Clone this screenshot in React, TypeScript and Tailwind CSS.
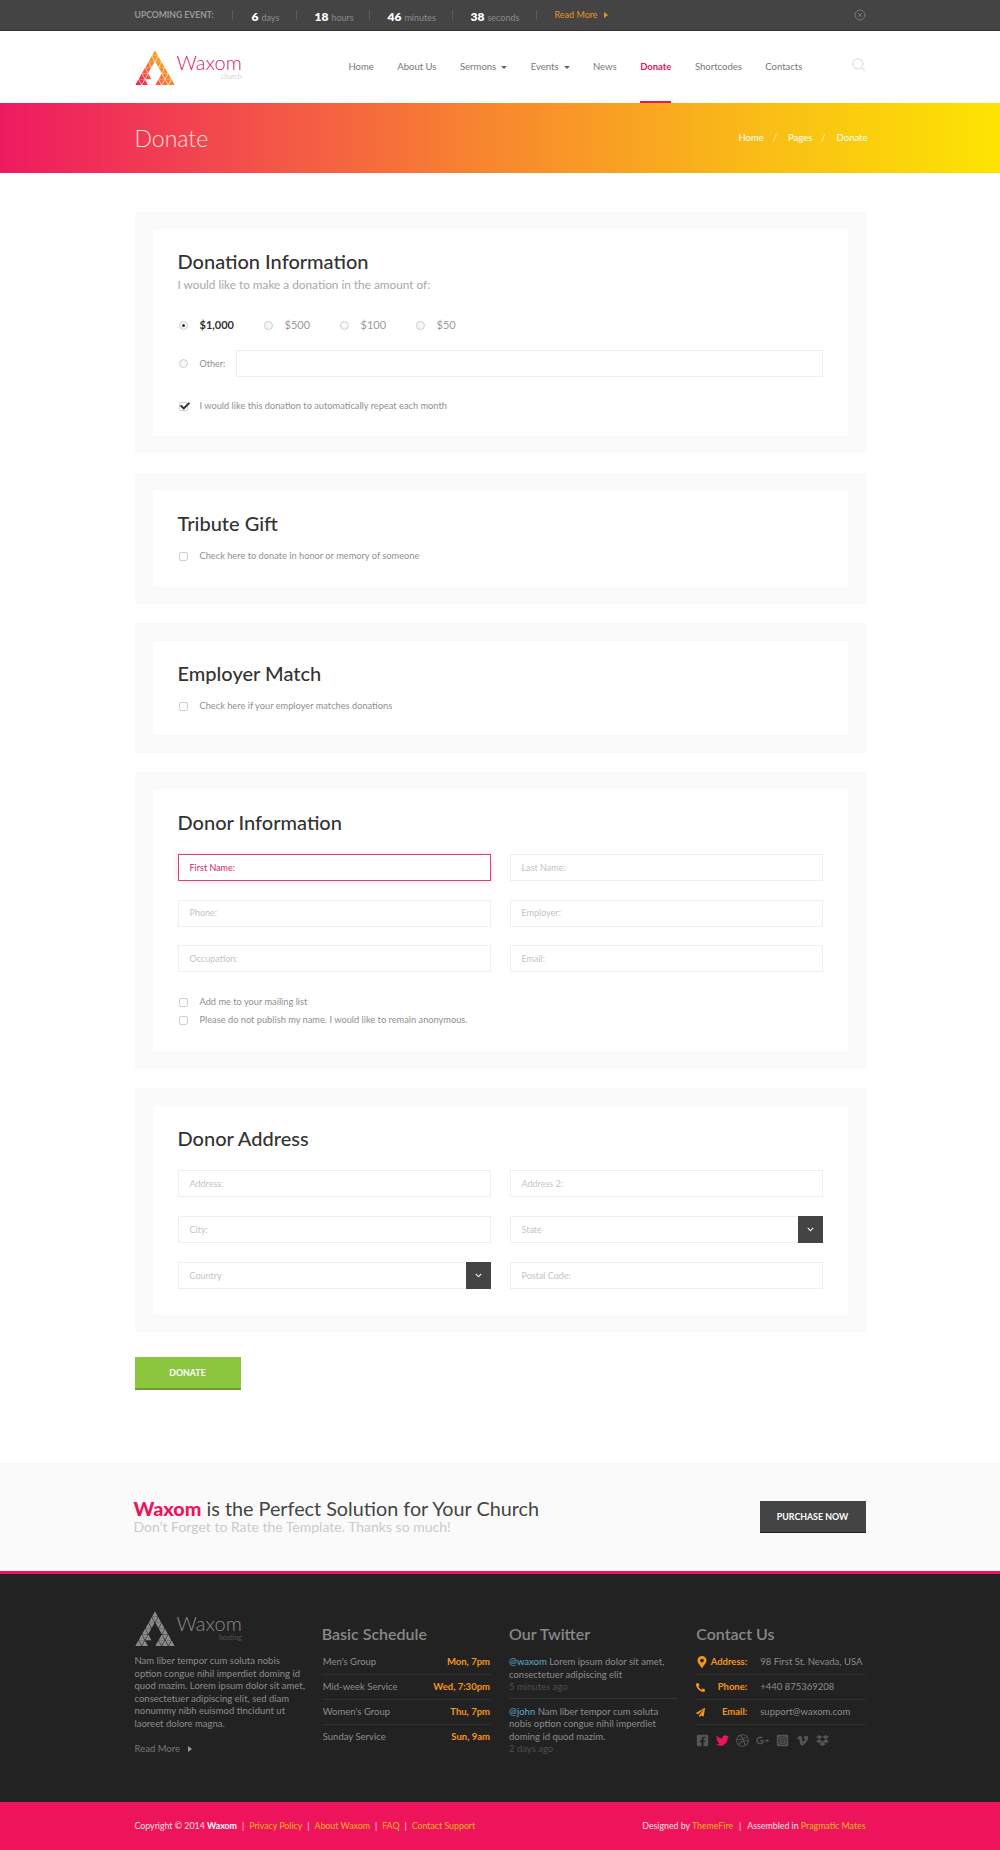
import React from "react";
import {
  FaCheck,
  FaChevronDown,
  FaDribbble,
  FaDropbox,
  FaFacebookSquare,
  FaGooglePlusG,
  FaInstagramSquare,
  FaMapMarkerAlt,
  FaPaperPlane,
  FaPhoneAlt,
  FaTwitter,
  FaVimeoV,
} from "react-icons/fa";
import { FiSearch, FiXCircle } from "react-icons/fi";

// small triangles of the logo, [row, col, up?]
const logoCells: [number, number, boolean][] = [
  [0, 0, true],
  [1, 0, true], [1, 0, false], [1, 1, true],
  [2, 0, true], [2, 0, false], [2, 2, true], [2, 1, false],
  [3, 0, true], [3, 0, false], [3, 3, true], [3, 2, false],
  [4, 0, true], [4, 0, false], [4, 1, true], [4, 3, true], [4, 3, false], [4, 4, true],
  [5, 0, true], [5, 0, false], [5, 1, true], [5, 3, true], [5, 3, false], [5, 4, true], [5, 4, false], [5, 5, true],
];

function Triangles({ fill }: { fill: string }) {
  const side = 6.67;
  const h = 5.83;
  return (
    <>
      {logoCells.map(([r, c, up], i) => {
        const left = 20 - ((r + 1) * side) / 2 + c * side;
        const top = r * h;
        const pts = up
          ? `${left + side / 2},${top + 0.3} ${left + side - 0.4},${top + h} ${left + 0.4},${top + h}`
          : `${left + side / 2 + 0.4},${top + 0.1} ${left + side * 1.5 - 0.4},${top + 0.1} ${left + side},${top + h - 0.4}`;
        return <polygon key={i} points={pts} fill={fill} />;
      })}
    </>
  );
}

function LogoMark({ mono }: { mono?: boolean }) {
  return (
    <svg width="40" height="35" viewBox="0 0 40 35" className="shrink-0">
      <defs>
        <linearGradient id="logoGrad" gradientUnits="userSpaceOnUse" x1="0" y1="35" x2="30" y2="5">
          <stop offset="0" stopColor="#ed1558" />
          <stop offset="0.55" stopColor="#f6783a" />
          <stop offset="1" stopColor="#fcb614" />
        </linearGradient>
      </defs>
      <Triangles fill={mono ? "#8a8a8a" : "url(#logoGrad)"} />
    </svg>
  );
}

function Radio({ checked }: { checked?: boolean }) {
  return (
    <span className="ml-[1px] flex h-[9px] w-[9px] shrink-0 items-center justify-center rounded-full border border-[#cfcfcf] bg-[#f6f6f6]">
      {checked && <span className="h-[3px] w-[3px] rounded-full bg-[#333]" />}
    </span>
  );
}

function CheckRow({ label, checked }: { label: string; checked?: boolean }) {
  return (
    <div className="flex h-[18px] items-center whitespace-nowrap text-[9.25px] text-[#8f8f8f]">
      <span className="relative ml-[1px] mr-[12px] block h-[9px] w-[9px] shrink-0 rounded-[2px] border border-[#cfcfcf] bg-white">
        {checked && <FaCheck className="absolute -top-[2px] left-0 text-[10px] text-[#333]" />}
      </span>
      {label}
    </div>
  );
}

function Field({ label, focus, select }: { label: string; focus?: boolean; select?: boolean }) {
  return (
    <div
      className={`relative flex h-[27px] items-center px-[11px] text-[9px] ${
        focus
          ? "border border-[#d9447f] text-[#e0185f] shadow-[0_0_6px_rgba(237,20,91,0.18)]"
          : "border border-[#efefef] text-[#c4c4c4]"
      }`}
    >
      {label}
      {select && (
        <span className="absolute -right-px -top-px flex h-[27px] w-[25px] items-center justify-center bg-[#444] text-[7px] text-white">
          <FaChevronDown />
        </span>
      )}
    </div>
  );
}

function Card({ children, pb }: { children: React.ReactNode; pb: string }) {
  return (
    <section className="mb-[19px] bg-[#fafafa] p-[18px]">
      <div className={`bg-white px-[25px] ${pb}`}>{children}</div>
    </section>
  );
}

function CardTitle({ children }: { children: React.ReactNode }) {
  return <h2 className="text-[20px] font-medium leading-[24px] text-[#333]">{children}</h2>;
}

const schedule = [
  ["Men's Group", "Mon, 7pm"],
  ["Mid-week Service", "Wed, 7:30pm"],
  ["Women's Group", "Thu, 7pm"],
  ["Sunday Service", "Sun, 9am"],
];

const contacts = [
  { icon: <FaMapMarkerAlt className="text-[12px]" />, label: "Address:", value: "98 First St. Nevada, USA" },
  { icon: <FaPhoneAlt className="text-[9px]" />, label: "Phone:", value: "+440 875369208" },
  { icon: <FaPaperPlane className="text-[9px]" />, label: "Email:", value: "support@waxom.com" },
];

const Sep = () => <span className="h-[10px] w-px bg-[#5c5c5c]" />;

function Count({ n, unit }: { n: string; unit: string }) {
  return (
    <span className="whitespace-nowrap text-[9px] text-[#8c8c8c]">
      <b className="mr-[3px] text-[12px] font-extrabold text-white">{n}</b>
      {unit}
    </span>
  );
}

export default function App() {
  const nav = ["Home", "About Us", "Sermons", "Events", "News", "Donate", "Shortcodes", "Contacts"];
  return (
    <div className="w-[1000px] bg-white font-[Lato,sans-serif]">
      {/* event bar */}
      <div className="h-[31px] border-b border-[#333] bg-[#444]">
        <div className="mx-auto flex h-full w-[731px] items-center">
          <span className="w-[97px] whitespace-nowrap text-[8.6px] font-bold text-[#9a9a9a]">UPCOMING EVENT:</span>
          <Sep />
          <span className="w-[63px] pl-[19px]"><Count n="6" unit="days" /></span>
          <Sep />
          <span className="w-[72px] pl-[18px]"><Count n="18" unit="hours" /></span>
          <Sep />
          <span className="w-[82px] pl-[18px]"><Count n="46" unit="minutes" /></span>
          <Sep />
          <span className="w-[83px] pl-[18px]"><Count n="38" unit="seconds" /></span>
          <Sep />
          <span className="ml-[18px] text-[9px] text-[#e8941e]">Read More</span>
          <span className="ml-[6px] h-0 w-0 border-y-[3px] border-l-[4px] border-y-transparent border-l-[#e8941e]" />
          <FiXCircle className="ml-auto text-[12px] text-[#777]" />
        </div>
      </div>

      {/* main nav */}
      <header className="h-[72px]">
        <div className="mx-auto flex h-full w-[731px]">
          <div className="flex w-[214px] items-start pt-[19px]">
            <LogoMark />
            <div className="ml-[2px] mt-[2px]">
              <div className="text-[20px] font-light leading-[20px] text-[#e0185f]">Waxom</div>
              <div className="text-right text-[7px] leading-[8px] text-[#d5d5d5]">church</div>
            </div>
          </div>
          <nav className="flex whitespace-nowrap text-[9.5px] text-[#777]">
            {nav.map((item) => (
              <a
                key={item}
                className={`mr-[23.5px] flex h-[72px] items-center border-b-2 pt-[2px] ${
                  item === "Donate" ? "border-[#ed145b] font-bold text-[#e0185f]" : "border-transparent"
                }`}
              >
                {item}
                {(item === "Sermons" || item === "Events") && (
                  <span className="ml-[5px] h-0 w-0 border-x-[3px] border-t-[3px] border-x-transparent border-t-[#666]" />
                )}
              </a>
            ))}
          </nav>
          <FiSearch strokeWidth={3} className="ml-auto mt-[26px] text-[15px] text-[#e8e8e8]" />
        </div>
      </header>

      {/* page title */}
      <div className="h-[70px] bg-[linear-gradient(90deg,#ee1a61_0%,#f3504a_25%,#f8892d_50%,#f9bb17_75%,#fde402_100%)]">
        <div className="mx-auto flex h-full w-[731px] items-center justify-between">
          <h1 className="text-[23px] font-light text-[#fbe3df]">Donate</h1>
          <div className="-mr-[2px] flex gap-[9px] text-[9.5px] text-white">
            <span>Home</span>
            <span className="opacity-70">/</span>
            <span className="ml-[2px]">Pages</span>
            <span className="opacity-70">/</span>
            <span className="ml-[2px]">Donate</span>
          </div>
        </div>
      </div>

      <main className="mx-auto w-[731px] pt-[39px]">
        <Card pb="pb-[21px]">
          <div className="pt-[19px]">
            <CardTitle>Donation Information</CardTitle>
            <p className="mt-[3px] text-[11.8px] leading-[18px] text-[#a8a8a8]">I would like to make a donation in the amount of:</p>
            <div className="mt-[22px] flex h-[18px] items-center text-[11px] text-[#9a9a9a]">
              <Radio checked />
              <b className="ml-[12px] w-[63px] font-bold text-[#333]">$1,000</b>
              <Radio />
              <span className="ml-[12px] w-[54px]">$500</span>
              <Radio />
              <span className="ml-[12px] w-[54px]">$100</span>
              <Radio />
              <span className="ml-[12px]">$50</span>
            </div>
            <div className="mt-[16px] flex items-center text-[9px] text-[#8f8f8f]">
              <Radio />
              <span className="ml-[12px] w-[36px]">Other:</span>
              <div className="h-[27px] flex-1 border border-[#efefef]" />
            </div>
            <div className="mt-[20px]">
              <CheckRow checked label="I would like this donation to automatically repeat each month" />
            </div>
          </div>
        </Card>

        <Card pb="pb-[21px]">
          <div className="pt-[20px]">
            <CardTitle>Tribute Gift</CardTitle>
            <div className="mt-[12px]">
              <CheckRow label="Check here to donate in honor or memory of someone" />
            </div>
          </div>
        </Card>

        <Card pb="pb-[20px]">
          <div className="pt-[20px]">
            <CardTitle>Employer Match</CardTitle>
            <div className="mt-[12px]">
              <CheckRow label="Check here if your employer matches donations" />
            </div>
          </div>
        </Card>

        <Card pb="pb-[22px]">
          <div className="pt-[20px]">
            <CardTitle>Donor Information</CardTitle>
            <div className="mt-[20px] grid grid-cols-2 gap-x-[19px] gap-y-[18.5px]">
              <Field focus label="First Name:" />
              <Field label="Last Name:" />
              <Field label="Phone:" />
              <Field label="Employer:" />
              <Field label="Occupation:" />
              <Field label="Email:" />
            </div>
            <div className="mt-[21px]">
              <CheckRow label="Add me to your mailing list" />
              <CheckRow label="Please do not publish my name. I would like to remain anonymous." />
            </div>
          </div>
        </Card>

        <Card pb="pb-[25px]">
          <div className="pt-[20px]">
            <CardTitle>Donor Address</CardTitle>
            <div className="mt-[20px] grid grid-cols-2 gap-x-[19px] gap-y-[19px]">
              <Field label="Address:" />
              <Field label="Address 2:" />
              <Field label="City:" />
              <Field select label="State" />
              <Field select label="Country" />
              <Field label="Postal Code:" />
            </div>
          </div>
        </Card>

        <button className="mb-[73px] mt-[25px] block h-[33px] w-[106px] border-b-2 border-[#6f9e2f] bg-[#8cc63f] text-[8.8px] font-bold text-white">
          DONATE
        </button>
      </main>

      {/* call to action */}
      <div className="h-[111px] border-b-[3px] border-[#ed145b] bg-[#fafafa]">
        <div className="mx-auto flex h-full w-[731px] items-center justify-between">
          <div className="-ml-[1px] -mt-[2px]">
            <div className="text-[19.8px] leading-[22px] text-[#444]">
              <b className="font-black text-[#ed145b]">Waxom</b> is the Perfect Solution for Your Church
            </div>
            <div className="text-[14px] leading-[16px] text-[#cacaca]">Don't Forget to Rate the Template. Thanks so much!</div>
          </div>
          <button className="h-[32px] w-[106px] border-b border-[#222] bg-[#444] text-[8.8px] font-bold text-white">
            PURCHASE NOW
          </button>
        </div>
      </div>

      {/* footer */}
      <footer className="h-[228px] bg-[#222]">
        <div className="mx-auto grid w-[731px] grid-cols-4 gap-x-[18px] pt-[37px] text-[9.5px] leading-[12.5px] text-[#8c8c8c]">
          <div>
            <div className="flex">
              <LogoMark mono />
              <div className="ml-[2px] mt-[2px]">
                <div className="text-[20px] font-light leading-[20px] text-[#8a8a8a]">Waxom</div>
                <div className="text-right text-[7px] leading-[8px] text-[#555]">hosting</div>
              </div>
            </div>
            <p className="mt-[9px] whitespace-nowrap">
              Nam liber tempor cum soluta nobis<br />
              option congue nihil imperdiet doming id<br />
              quod mazim. Lorem ipsum dolor sit amet,<br />
              consectetuer adipiscing elit, sed diam<br />
              nonummy nibh euismod tincidunt ut<br />
              laoreet dolore magna.
            </p>
            <div className="mt-[13px] flex items-center text-[#777]">
              Read More
              <span className="ml-[8px] h-0 w-0 border-y-[3px] border-l-[4px] border-y-transparent border-l-[#999]" />
            </div>
          </div>

          <div>
            <h3 className="mt-[14px] text-[16px] font-semibold leading-[18px] text-[#888]">Basic Schedule</h3>
            <ul className="mt-[7px]">
              {schedule.map(([name, time]) => (
                <li key={name} className="flex h-[25px] items-center justify-between border-b border-[#2f2f2f] px-[1px] last:border-b-0">
                  <span>{name}</span>
                  <b className="font-bold text-[#f7941e]">{time}</b>
                </li>
              ))}
            </ul>
          </div>

          <div>
            <h3 className="mt-[14px] text-[16px] font-semibold leading-[18px] text-[#888]">Our Twitter</h3>
            <div className="mt-[13px] border-b border-[#333] pb-[4px]">
              <p><span className="text-[#5fa8c8]">@waxom</span> Lorem ipsum dolor sit amet,<br />consectetuer adipiscing elit</p>
              <p className="text-[#4d4d4d]">5 minutes ago</p>
            </div>
            <div className="mt-[7px]">
              <p><span className="text-[#5fa8c8]">@john</span> Nam liber tempor cum soluta<br />nobis option congue nihil imperdiet<br />doming id quod mazim.</p>
              <p className="text-[#4d4d4d]">2 days ago</p>
            </div>
          </div>

          <div>
            <h3 className="mt-[14px] text-[16px] font-semibold leading-[18px] text-[#888]">Contact Us</h3>
            <ul className="mt-[7px]">
              {contacts.map((c) => (
                <li key={c.label} className="flex h-[25px] items-center whitespace-nowrap border-b border-[#2f2f2f]">
                  <span className="w-[12px] text-[#f7941e]">{c.icon}</span>
                  <b className="w-[39px] text-right font-bold text-[#f7941e]">{c.label}</b>
                  <span className="ml-[13px]">{c.value}</span>
                </li>
              ))}
            </ul>
            <div className="mt-[9px] flex items-center gap-[7px] text-[13px] text-[#555]">
              <FaFacebookSquare />
              <FaTwitter className="text-[#ed145b]" />
              <FaDribbble />
              <FaGooglePlusG />
              <FaInstagramSquare />
              <FaVimeoV />
              <FaDropbox />
            </div>
          </div>
        </div>
      </footer>

      {/* copyright */}
      <div className="h-[48px] bg-[#ed145b]">
        <div className="mx-auto flex h-full w-[731px] items-center justify-between text-[8.8px] text-[#fbe3df]">
          <div className="flex gap-[5px]">
            <span>Copyright © 2014 <b className="text-white">Waxom</b></span>
            <span>|</span>
            <span className="text-[#fdb813]">Privacy Policy</span>
            <span>|</span>
            <span className="text-[#fdb813]">About Waxom</span>
            <span>|</span>
            <span className="text-[#fdb813]">FAQ</span>
            <span>|</span>
            <span className="text-[#fdb813]">Contact Support</span>
          </div>
          <div className="flex gap-[6px]">
            <span>Designed by <span className="text-[#fdb813]">ThemeFire</span></span>
            <span>|</span>
            <span>Assembled in <span className="text-[#fdb813]">Pragmatic Mates</span></span>
          </div>
        </div>
      </div>
    </div>
  );
}
